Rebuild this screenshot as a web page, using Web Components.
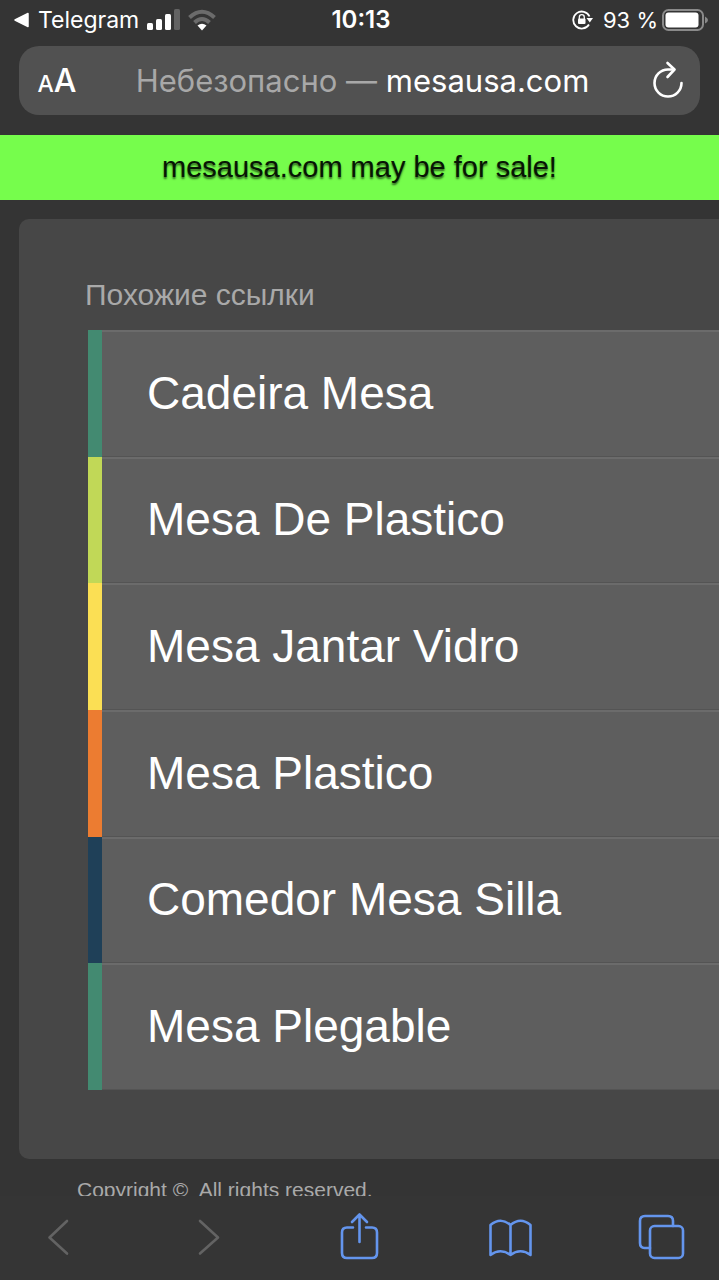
<!DOCTYPE html>
<html lang="ru">
<head>
<meta charset="utf-8">
<meta name="viewport" content="width=device-width, initial-scale=1">
<title>mesausa.com</title>
<style>
  html, body { margin: 0; height: 100%; background: #343434; }
  body { font-family: Inter, "Liberation Sans", sans-serif; color: #fff; overflow: hidden; }
</style>
</head>
<body>
<phone-browser>
  <status-bar slot="top" app="Telegram" time="10:13" battery="93 %"></status-bar>
  <address-bar slot="top" note="Небезопасно —" host="mesausa.com"></address-bar>
  <sale-banner>mesausa.com may be for sale!</sale-banner>
  <link-panel heading="Похожие ссылки">
    <link-row style="--accent:#438a71">Cadeira Mesa</link-row>
    <link-row style="--accent:#c1d857">Mesa De Plastico</link-row>
    <link-row style="--accent:#fbdf54">Mesa Jantar Vidro</link-row>
    <link-row style="--accent:#ec7c31">Mesa Plastico</link-row>
    <link-row style="--accent:#1f4058">Comedor Mesa Silla</link-row>
    <link-row style="--accent:#438a71">Mesa Plegable</link-row>
  </link-panel>
  <page-footer>Copyright ©&nbsp; All rights reserved.</page-footer>
  <tool-bar slot="bottom"></tool-bar>
</phone-browser>

<script>
const define = (name, html) => customElements.define(name, class extends HTMLElement {
  constructor() {
    super();
    this.attachShadow({ mode: "open" }).innerHTML = html;
  }
  connectedCallback() {
    this.shadowRoot.querySelectorAll("[data-attr]").forEach(el => {
      el.textContent = this.getAttribute(el.dataset.attr);
    });
  }
});

define("phone-browser", `
  <style>
    :host { display: flex; flex-direction: column; height: 100vh; }
    main { flex: 1; min-height: 0; overflow: hidden; }
  </style>
  <slot name="top"></slot>
  <main><slot></slot></main>
  <slot name="bottom"></slot>`);

define("status-bar", `
  <style>
    :host { display: grid; grid-template-columns: 1fr auto 1fr; align-items: center;
            height: 40px; padding: 0 11px 0 14px; font-size: 23px; line-height: 28px; }
    div { display: flex; align-items: center; }
    svg { display: block; flex: none; }
    .left { gap: 8px; }
    .right { justify-content: flex-end; gap: 4px; font-size: 22px; }
    .lock { margin-right: 6px; }
    time { font-size: 24px; font-weight: 600; }
  </style>
  <div class="left">
    <svg width="16" height="16" viewBox="0 0 16 16"><path d="M1 8 14 1.5V14.5Z" fill="#fff" stroke="#fff" stroke-width="1.5" stroke-linejoin="round"/></svg>
    <span data-attr="app"></span>
    <svg width="33" height="22" viewBox="0 0 33 22"><g fill="#fff"><rect x="0" y="14" width="6" height="7" rx="1.5"/><rect x="9" y="10" width="6" height="11" rx="1.5"/><rect x="18" y="5" width="6" height="16" rx="1.5"/></g><rect x="27" y="0" width="6" height="21" rx="1.5" fill="#636363"/></svg>
    <svg width="28" height="22" viewBox="0 0 28 22"><g fill="none" stroke="#6b6b6b" stroke-width="4"><path d="M1.500 8.500Q14-3 26.500 8.500"/><path d="M6.500 13.500Q14 6.500 21.500 13.500"/></g><path d="M9.500 16.500Q14 13 18.500 16.500L14 21.500Z" fill="#fff"/></svg>
  </div>
  <time data-attr="time"></time>
  <div class="right">
    <svg class="lock" width="21" height="20" viewBox="0 0 21 20"><path d="M17 14.500A8.500 8.500 0 1 1 17.500 6.500" fill="none" stroke="#fff" stroke-width="1.800"/><path d="M14.500 8H21L17.800 12.500Z" fill="#fff"/><rect x="6" y="8.500" width="7.500" height="5.500" rx="1" fill="#fff"/><path d="M7.300 9V7.200a2.500 2.500 0 0 1 5 0V9" fill="none" stroke="#fff" stroke-width="1.300"/></svg>
    <span data-attr="battery"></span>
    <svg width="46" height="22" viewBox="0 0 46 22"><rect x="1" y="1" width="40" height="20" rx="5.500" fill="none" stroke="#8a8a8a" stroke-width="2"/><rect x="3.500" y="3.500" width="33" height="15" rx="3" fill="#fff"/><path d="M43 7.500Q46 9 46 11T43 14.500Z" fill="#8a8a8a"/></svg>
  </div>`);

define("address-bar", `
  <style>
    :host { display: block; padding: 6px 19px 20px; }
    div { display: flex; align-items: center; justify-content: space-between; height: 69px;
          padding: 0 8px 0 14px; border-radius: 20px; background: #515151; }
    button { all: unset; display: flex; align-items: baseline; justify-content: center; width: 48px; height: 40px; line-height: 40px; font-weight: 500; }
    .small { font-size: 23px; } .big { font-size: 32px; }
    p { margin: 0; font-size: 31px; line-height: 40px; white-space: nowrap; }
    .note { color: #a8a8a8; }
    svg { display: block; }
  </style>
  <div>
    <button type="button"><span class="small">A</span><span class="big">A</span></button>
    <p><span class="note" data-attr="note"></span> <span data-attr="host"></span></p>
    <button type="button" aria-label="Обновить"><svg width="32" height="38" viewBox="0 0 32 38" fill="none" stroke="#fff" stroke-width="2.600" stroke-linecap="round" stroke-linejoin="round"><path d="M29.500 22A13.500 13.500 0 1 1 16 8.500H22"/><path d="M15.500 2 22.500 8.500 15.500 16"/></svg></button>
  </div>`);

define("sale-banner", `
  <style>
    :host { display: block; height: 65px; margin-bottom: 19px; background: #76fd4c; text-align: center;
            font: 29px/65px "Liberation Sans", sans-serif; }
    a { color: #071504; text-decoration: none; text-shadow: 0 2px 2px rgba(0,0,0,.6); }
  </style>
  <a href="#sale"><slot></slot></a>`);

define("link-panel", `
  <style>
    :host { display: block; margin-left: 19px; padding: 58px 0 69px 66px; border-radius: 10px 0 0 10px;
            background: #474747; font-family: "Liberation Sans", sans-serif; }
    h1 { margin: 0 0 17px; font-size: 30px; line-height: 36px; font-weight: 400; color: #a9a9a9; }
    nav { display: grid; grid-auto-rows: 1fr; min-height: 760px; margin-left: 3px; }
  </style>
  <h1 data-attr="heading"></h1>
  <nav><slot></slot></nav>`);

define("link-row", `
  <style>
    :host { display: grid; border-left: 14px solid var(--accent); background: #5e5e5e; }
    a { display: flex; align-items: center; padding: 0 0 2px 45px; border-top: 2px solid #6b6b6b; border-bottom: 1px solid #545454;
        color: #fff; font-size: 46px; line-height: 52px; text-decoration: none; }
  </style>
  <a href="#link"><slot></slot></a>`);

define("page-footer", `
  <style>
    :host { display: block; padding: 19px 77px; font: 21px/24px "Liberation Sans", sans-serif; color: #a9a9a9; }
  </style>
  <slot></slot>`);

define("tool-bar", `
  <style>
    :host { display: flex; justify-content: space-between; height: 84px; box-sizing: border-box; padding: 16px 33px 20px 34px; background: #353535; }
    button { all: unset; width: 48px; height: 48px; color: #6495ed; }
    button:disabled { color: #636363; }
    svg { display: block; fill: none; stroke: currentColor; stroke-width: 2.600; stroke-linecap: round; stroke-linejoin: round; }
  </style>
  <button type="button" disabled aria-label="Назад"><svg width="48" height="48" viewBox="0 0 48 48"><path d="M33 9 15.500 25.500 33 41.500"/></svg></button>
  <button type="button" disabled aria-label="Вперёд"><svg width="48" height="48" viewBox="0 0 48 48"><path d="M15 9 33 25.500 15 41.500"/></svg></button>
  <button type="button" aria-label="Поделиться"><svg width="48" height="48" viewBox="0 0 48 48"><path d="M17 15.500H11Q6 15.500 6 20.500V41Q6 46 11 46H36Q41 46 41 41V20.500Q41 15.500 36 15.500H30M23.500 30V3M16 10 23.500 2.500 31 10"/></svg></button>
  <button type="button" aria-label="Закладки"><svg width="48" height="48" viewBox="0 0 48 48"><path d="M23.500 13V43M23.500 13Q13.500 4.500 3.500 13V43Q13.500 35.500 23.500 43Q33.500 35.500 43.500 43V13Q33.500 4.500 23.500 13"/></svg></button>
  <button type="button" aria-label="Вкладки"><svg width="48" height="48" viewBox="0 0 48 48"><rect x="12" y="14" width="33" height="32" rx="4.500"/><path d="M12 36H6.500Q2 36 2 31V9Q2 4 7 4H30Q35 4 35 9V14"/></svg></button>`);
</script>
</body>
</html>
